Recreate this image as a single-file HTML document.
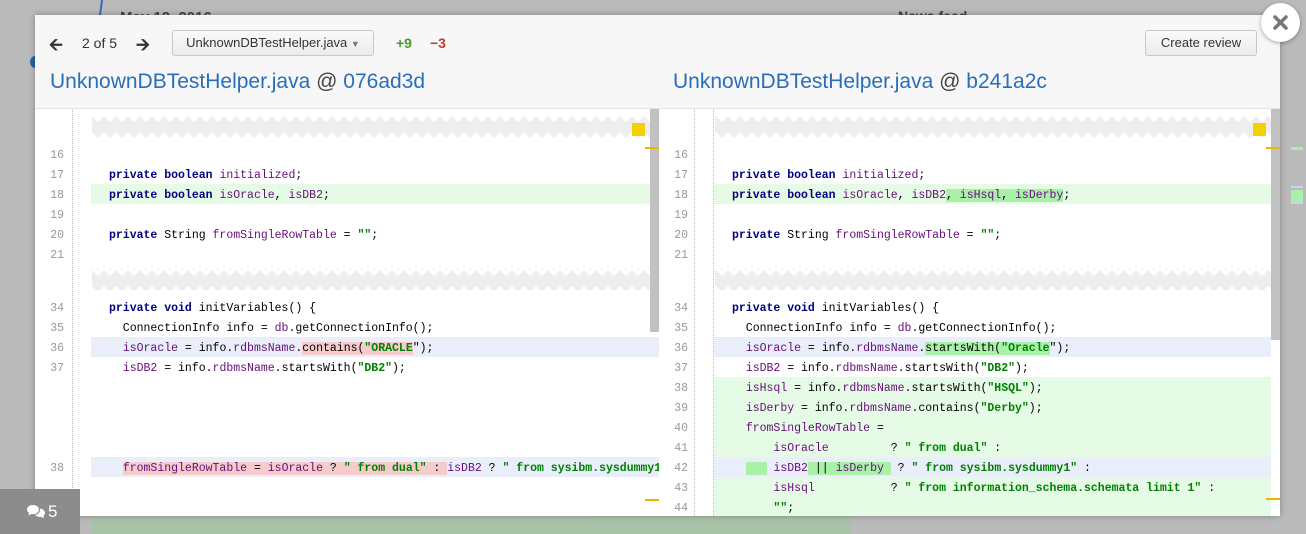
<!DOCTYPE html>
<html><head><meta charset="utf-8"><style>
*{margin:0;padding:0;box-sizing:border-box}
body{width:1306px;height:534px;overflow:hidden;background:#bababa;position:relative;font-family:"Liberation Sans",sans-serif}
.abs{position:absolute}
.modal{position:absolute;left:35px;top:15px;width:1245px;height:501px;background:#fff;box-shadow:0 0 6px rgba(0,0,0,.3);overflow:hidden}
.hdr{position:absolute;left:0;top:0;width:1245px;height:94px;background:#f7f7f7;border-bottom:1px solid #e4e4e4}
.btn{position:absolute;top:15px;height:26px;border:1px solid #c8c8c8;border-radius:3px;background:linear-gradient(#fafafa,#ececec);font-size:13px;color:#333;line-height:24px;text-align:center}
.title{position:absolute;top:55px;font-size:21px;color:#2a6ebb;white-space:nowrap}
.title b{font-weight:normal;color:#444}
.code{font-family:"Liberation Mono",monospace;font-size:11.5px;white-space:pre;line-height:20px;position:absolute;height:20px;padding-top:2px}
.ln{font-family:"Liberation Mono",monospace;font-size:11.5px;color:#999;position:absolute;width:30px;text-align:right;line-height:20px;padding-top:2px}
.k{color:#000080;font-weight:bold}
.f{color:#660e7a}
.s{color:#008000;font-weight:bold}
.row{position:absolute;height:20px}
.g{background:#e6fbe6}
.b{background:#e9eefa}
.hr{background:#f6cbcb}
.hg{background:#a9f0a9}
.dot{position:absolute;border-left:1px dotted #bbb}
</style></head><body>
<div class="abs" style="left:100px;top:0;width:2px;height:15px;background:#2a6ebb;transform:skewX(-8deg)"></div>
<div class="abs" style="left:120px;top:9px;font-size:15px;font-weight:bold;color:#444">May 12, 2016</div>
<div class="abs" style="left:898px;top:8px;font-size:14px;font-weight:bold;color:#444">News feed</div>
<div class="abs" style="left:30px;top:56px;width:10px;height:12px;border-radius:50%;background:#1f66a8"></div>

<div class="abs" style="left:92px;top:510px;width:758px;height:24px;background:#a9c3a8"></div>
<div class="abs" style="left:92px;top:510px;width:500px;height:7px;background:#bcbcbc"></div>

<!-- minimap -->
<div class="abs" style="left:1291px;top:147px;width:12px;height:3px;background:#a9f0a9"></div>
<div class="abs" style="left:1291px;top:186px;width:12px;height:2px;background:#c8d4f0"></div>
<div class="abs" style="left:1291px;top:190px;width:12px;height:12px;background:#a9f0a9"></div>
<div class="abs" style="left:1291px;top:202px;width:12px;height:2px;background:#c8d4f0"></div>

<div class="modal">
 <div class="hdr">
  <div class="abs" style="left:14px;top:17px;font-size:17px;font-weight:bold;color:#333">&#129128;</div>
  <div class="abs" style="left:47px;top:20px;font-size:14px;color:#333">2 of 5</div>
  <div class="abs" style="left:101px;top:17px;font-size:17px;font-weight:bold;color:#333">&#129130;</div>
  <div class="btn" style="left:137px;width:202px">UnknownDBTestHelper.java <span style="font-size:9px;color:#777">&#9660;</span></div>
  <div class="abs" style="left:361px;top:20px;font-size:14px;font-weight:bold;color:#4a9d2a">+9</div>
  <div class="abs" style="left:395px;top:20px;font-size:14px;font-weight:bold;color:#c0392b">&minus;3</div>
  <div class="btn" style="left:1110px;width:112px">Create review</div>
  <div class="title" style="left:15px">UnknownDBTestHelper.java <b>@</b> 076ad3d</div>
  <div class="title" style="left:638px">UnknownDBTestHelper.java <b>@</b> b241a2c</div>
 </div>
</div>

<svg class="abs" style="left:0;top:0" width="1306" height="534">
 <defs>
  <pattern id="zz" x="92" y="116" width="12" height="22" patternUnits="userSpaceOnUse">
   <rect width="12" height="22" fill="#fff"/>
   <polygon points="0,0 6,6 12,0 12,16 6,22 0,16" fill="#eeeeee"/>
  </pattern>
 </defs>
 <rect x="92" y="116" width="558" height="22" fill="url(#zz)"/>
 <rect x="92" y="268" width="558" height="22" fill="url(#zz)"/>
 <rect x="715" y="116" width="556" height="22" fill="url(#zz)"/>
 <rect x="715" y="268" width="556" height="22" fill="url(#zz)"/>
</svg>

<div class="dot" style="left:72px;top:109px;height:407px"></div>
<div class="dot" style="left:694px;top:109px;height:407px"></div>
<div class="dot" style="left:713px;top:109px;height:407px"></div>

<div class="row g" style="left:91px;top:184px;width:568px"></div>
<div class="row b" style="left:91px;top:337px;width:568px"></div>
<div class="row b" style="left:91px;top:457px;width:568px"></div>
<div class="row g" style="left:714px;top:184px;width:557px"></div>
<div class="row b" style="left:714px;top:337px;width:557px"></div>
<div class="row g" style="left:714px;top:377px;width:557px;height:80px"></div>
<div class="row b" style="left:714px;top:457px;width:557px"></div>
<div class="row g" style="left:714px;top:477px;width:557px;height:39px"></div>

<div class="abs" style="left:650px;top:109px;width:9px;height:223px;background:#c1c1c1"></div>
<div class="abs" style="left:1271px;top:109px;width:9px;height:231px;background:#c1c1c1"></div>
<div class="abs" style="left:632px;top:123px;width:13px;height:13px;background:#f2d200"></div>
<div class="abs" style="left:1253px;top:123px;width:13px;height:13px;background:#f2d200"></div>
<div class="abs" style="left:645px;top:147px;width:14px;height:2px;background:#e8b800"></div>
<div class="abs" style="left:1266px;top:147px;width:14px;height:2px;background:#e8b800"></div>
<div class="abs" style="left:645px;top:499px;width:14px;height:2px;background:#e8b800"></div>
<div class="abs" style="left:1266px;top:498px;width:14px;height:2px;background:#e8b800"></div>

<div class="ln" style="left:34px;top:144px">16</div>
<div class="ln" style="left:34px;top:164px">17</div>
<div class="ln" style="left:34px;top:184px">18</div>
<div class="ln" style="left:34px;top:204px">19</div>
<div class="ln" style="left:34px;top:224px">20</div>
<div class="ln" style="left:34px;top:244px">21</div>
<div class="ln" style="left:34px;top:297px">34</div>
<div class="ln" style="left:34px;top:317px">35</div>
<div class="ln" style="left:34px;top:337px">36</div>
<div class="ln" style="left:34px;top:357px">37</div>
<div class="ln" style="left:34px;top:457px">38</div>

<div class="code" style="left:109px;top:164px"><span class="k">private boolean</span> <span class="f">initialized</span>;</div>
<div class="code" style="left:109px;top:184px"><span class="k">private boolean</span> <span class="f">isOracle</span>, <span class="f">isDB2</span>;</div>
<div class="code" style="left:109px;top:224px"><span class="k">private</span> String <span class="f">fromSingleRowTable</span> = <span class="s">""</span>;</div>
<div class="code" style="left:109px;top:297px"><span class="k">private void</span> initVariables() {</div>
<div class="code" style="left:109px;top:317px">  ConnectionInfo info = <span class="f">db</span>.getConnectionInfo();</div>
<div class="code" style="left:109px;top:337px">  <span class="f">isOracle</span> = info.<span class="f">rdbmsName</span>.<span class="hr">contains(<span class="s">"ORACLE</span></span>");</div>
<div class="code" style="left:109px;top:357px">  <span class="f">isDB2</span> = info.<span class="f">rdbmsName</span>.startsWith(<span class="s">"DB2"</span>);</div>
<div class="code" style="left:109px;top:457px;width:550px;overflow:hidden">  <span class="hr"><span class="f">fromSingleRowTable</span> = <span class="f">isOracle</span> ? <span class="s">" from dual"</span> : </span><span class="f">isDB2</span> ? <span class="s">" from sysibm.sysdummy1"</span> :</div>

<div class="ln" style="left:658px;top:144px">16</div>
<div class="ln" style="left:658px;top:164px">17</div>
<div class="ln" style="left:658px;top:184px">18</div>
<div class="ln" style="left:658px;top:204px">19</div>
<div class="ln" style="left:658px;top:224px">20</div>
<div class="ln" style="left:658px;top:244px">21</div>
<div class="ln" style="left:658px;top:297px">34</div>
<div class="ln" style="left:658px;top:317px">35</div>
<div class="ln" style="left:658px;top:337px">36</div>
<div class="ln" style="left:658px;top:357px">37</div>
<div class="ln" style="left:658px;top:377px">38</div>
<div class="ln" style="left:658px;top:397px">39</div>
<div class="ln" style="left:658px;top:417px">40</div>
<div class="ln" style="left:658px;top:437px">41</div>
<div class="ln" style="left:658px;top:457px">42</div>
<div class="ln" style="left:658px;top:477px">43</div>
<div class="ln" style="left:658px;top:497px">44</div>

<div class="code" style="left:732px;top:164px"><span class="k">private boolean</span> <span class="f">initialized</span>;</div>
<div class="code" style="left:732px;top:184px"><span class="k">private boolean</span> <span class="f">isOracle</span>, <span class="f">isDB2</span><span class="hg">, <span class="f">isHsql</span>, <span class="f">isDerby</span></span>;</div>
<div class="code" style="left:732px;top:224px"><span class="k">private</span> String <span class="f">fromSingleRowTable</span> = <span class="s">""</span>;</div>
<div class="code" style="left:732px;top:297px"><span class="k">private void</span> initVariables() {</div>
<div class="code" style="left:732px;top:317px">  ConnectionInfo info = <span class="f">db</span>.getConnectionInfo();</div>
<div class="code" style="left:732px;top:337px">  <span class="f">isOracle</span> = info.<span class="f">rdbmsName</span>.<span class="hg">startsWith(<span class="s">"Oracle</span></span>");</div>
<div class="code" style="left:732px;top:357px">  <span class="f">isDB2</span> = info.<span class="f">rdbmsName</span>.startsWith(<span class="s">"DB2"</span>);</div>
<div class="code" style="left:732px;top:377px">  <span class="f">isHsql</span> = info.<span class="f">rdbmsName</span>.startsWith(<span class="s">"HSQL"</span>);</div>
<div class="code" style="left:732px;top:397px">  <span class="f">isDerby</span> = info.<span class="f">rdbmsName</span>.contains(<span class="s">"Derby"</span>);</div>
<div class="code" style="left:732px;top:417px">  <span class="f">fromSingleRowTable</span> =</div>
<div class="code" style="left:732px;top:437px">      <span class="f">isOracle</span>         ? <span class="s">" from dual"</span> :</div>
<div class="code" style="left:732px;top:457px">  <span class="hg">   </span> <span class="f">isDB2</span><span class="hg"> || <span class="f">isDerby</span> </span> ? <span class="s">" from sysibm.sysdummy1"</span> :</div>
<div class="code" style="left:732px;top:477px">      <span class="f">isHsql</span>           ? <span class="s">" from information_schema.schemata limit 1"</span> :</div>
<div class="code" style="left:732px;top:497px;height:19px;overflow:hidden">      <span class="s">""</span>;</div>

<!-- comments box -->
<div class="abs" style="left:0;top:489px;width:80px;height:45px;background:#8c8c8c;color:#fff;font-size:17px;line-height:45px">
 <svg class="abs" style="left:26px;top:15px" width="20" height="16" viewBox="0 0 20 16"><path d="M7 1C3.5 1 1 3 1 5.5c0 1.4.8 2.6 2 3.4L2.5 11.5 5.5 10c.5.1 1 .1 1.5.1 3.5 0 6-2 6-4.6S10.5 1 7 1z" fill="#fff"/><path d="M14 4.5c2.8.4 5 2.2 5 4.4 0 1.2-.6 2.2-1.6 3l.6 2.4-2.8-1.4c-.4.1-.9.1-1.3.1-2.2 0-4-.9-5-2.2 3.3-.2 5.6-2.4 5.1-6.3z" fill="#fff"/></svg>
 <span class="abs" style="left:48px;top:0">5</span>
</div>

<div class="abs" style="left:1261px;top:3px;width:39px;height:39px;border-radius:50%;background:#fff;box-shadow:0 1px 4px rgba(0,0,0,.35)">
 <svg class="abs" style="left:12px;top:12px" width="15" height="15"><path d="M2 2L13 13M13 2L2 13" stroke="#777" stroke-width="3.5" stroke-linecap="round"/></svg>
</div>
</body></html>
